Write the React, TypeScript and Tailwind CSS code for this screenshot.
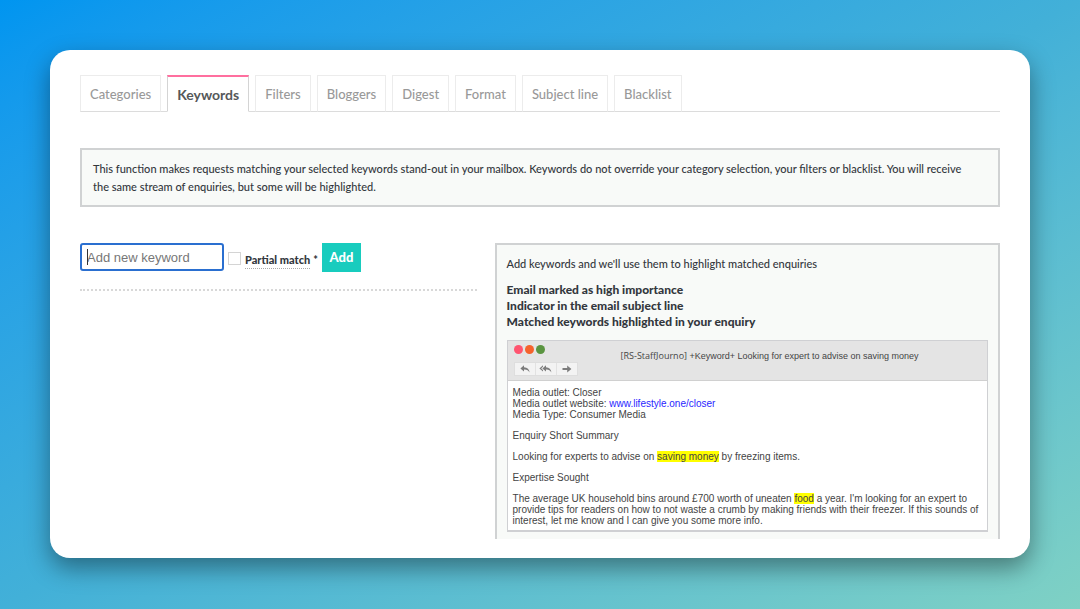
import { useState } from "react";

const tabs = [
  "Categories",
  "Keywords",
  "Filters",
  "Bloggers",
  "Digest",
  "Format",
  "Subject line",
  "Blacklist",
];

function ReplyIcon() {
  return (
    <svg width="10" height="8" viewBox="0 0 10 8" fill="currentColor">
      <path d="M4 0.3 L0.4 3.4 L4 6.4 V4.6 C6.6 4.4 8.4 5.2 9.6 7.6 C9.4 4.4 7.4 2.4 4 2.2 Z" />
    </svg>
  );
}

function ReplyAllIcon() {
  return (
    <svg width="13" height="8" viewBox="0 0 13 8" fill="currentColor">
      <path d="M4 0.3 L0.4 3.4 L4 6.4 V5 L2.2 3.4 L4 1.8 Z" />
      <path d="M7 0.3 L3.4 3.4 L7 6.4 V4.6 C9.4 4.4 11.2 5.2 12.4 7.6 C12.2 4.4 10.2 2.4 7 2.2 Z" />
    </svg>
  );
}

function ForwardIcon() {
  return (
    <svg width="10" height="8" viewBox="0 0 10 8" fill="currentColor">
      <path d="M0.5 3.1 H5.2 V0.6 L9.4 4 L5.2 7.4 V4.9 H0.5 Z" />
    </svg>
  );
}

function MailPreview() {
  return (
    <div className="mt-[10px] border border-b-2 border-[#cfd0d3] bg-white">
      {/* Window title bar */}
      <div className="flex h-10 items-start border-b border-[#d0d0d0] bg-[#e4e4e4] pl-[6px]">
        <div className="w-[107px] shrink-0">
          <div className="mt-1 flex gap-[2px]">
            <span className="h-[9px] w-[9px] rounded-full bg-[#ff5470]" />
            <span className="h-[9px] w-[9px] rounded-full bg-[#f5622c]" />
            <span className="h-[9px] w-[9px] rounded-full bg-[#5a9440]" />
          </div>
          <div className="mt-2 flex w-16 divide-x divide-[#e2e2e2] border border-[#dedede] bg-[#f3f3f3] text-[#7c7c7c]">
            <button aria-label="Reply" className="flex h-3 flex-1 items-center justify-center">
              <ReplyIcon />
            </button>
            <button aria-label="Reply all" className="flex h-3 flex-1 items-center justify-center">
              <ReplyAllIcon />
            </button>
            <button aria-label="Forward" className="flex h-3 flex-1 items-center justify-center">
              <ForwardIcon />
            </button>
          </div>
        </div>
        <p className="mt-[9px] font-['Liberation_Sans',sans-serif] text-[9px] leading-3 whitespace-nowrap text-[#444]">
          <span className="font-['Open_Sans',sans-serif]">[RS-StaffJourno]</span> +Keyword+ Looking
          for expert to advise on saving money
        </p>
      </div>

      {/* Message body */}
      <div className="space-y-[10px] px-[5px] pt-[6px] pb-1 font-['Liberation_Sans',sans-serif] text-[10px] leading-[11px] text-[#444]">
        <p>
          Media outlet: Closer
          <br />
          Media outlet website:{" "}
          <a href="#closer" className="text-[#2a1fff]">
            www.lifestyle.one/closer
          </a>
          <br />
          Media Type: Consumer Media
        </p>
        <p>Enquiry Short Summary</p>
        <p>
          Looking for experts to advise on{" "}
          <mark className="bg-[#ffff00] text-[#444]">saving money</mark> by freezing items.
        </p>
        <p>Expertise Sought</p>
        <p>
          The average UK household bins around £700 worth of uneaten{" "}
          <mark className="bg-[#ffff00] text-[#444]">food</mark> a year. I'm looking for an expert to
          <br />
          provide tips for readers on how to not waste a crumb by making friends with their freezer.
          If this sounds of
          <br />
          interest, let me know and I can give you some more info.
        </p>
      </div>
    </div>
  );
}

function App() {
  const [activeTab, setActiveTab] = useState("Keywords");
  const [keyword, setKeyword] = useState("");
  const [partial, setPartial] = useState(false);

  return (
    <div className="min-h-screen bg-linear-to-br from-[#0095f0] via-[#42b0d8] to-[#7fd1c4] p-[50px] font-['Lato',sans-serif] text-[#33373d]">
      <div className="rounded-[20px] bg-white px-[30px] pt-[25px] pb-[19px] shadow-[0_10px_24px_rgba(0,0,0,0.4)]">
        {/* Tabs */}
        <nav className="flex gap-[6px] border-b border-[#dcdcdc]">
          {tabs.map((tab) => (
            <button
              key={tab}
              onClick={() => setActiveTab(tab)}
              className={`-mb-px h-[37px] border px-[9px] pt-[2px] whitespace-nowrap ${
                activeTab === tab
                  ? "border-t-2 border-[#d4d4d4] border-t-[#ff6f9f] border-b-white bg-white text-sm font-bold text-[#55585a]"
                  : "border-[#ececec] border-b-[#dcdcdc] text-[13px] font-medium text-[#999]"
              }`}
            >
              {tab}
            </button>
          ))}
        </nav>

        <div className="mt-9 border-2 border-[#d0d2d3] bg-[#f8faf8] pt-[10px] pr-6 pb-[9px] pl-[11px] text-[11px] leading-[18px] font-medium">
          This function makes requests matching your selected keywords stand-out in your mailbox.
          Keywords do not override your category selection, your filters or blacklist. You will
          receive the same stream of enquiries, but some will be highlighted.
        </div>

        <div className="mt-9 grid grid-cols-[397fr_506fr] gap-[18px]">
          {/* Add keyword form */}
          <div>
            <form
              onSubmit={(e) => e.preventDefault()}
              className="flex h-12 items-start border-b-2 border-dotted border-[#d8d8d8]"
            >
              <div className="relative">
                <input
                  type="text"
                  autoFocus
                  aria-label="Keyword"
                  placeholder="Add new keyword"
                  value={keyword}
                  onChange={(e) => setKeyword(e.target.value)}
                  className="h-7 w-36 rounded-[3px] border-2 border-[#2a6fd0] px-[5px] font-['Liberation_Sans',sans-serif] text-[13px] outline-none placeholder:text-[#777] placeholder-shown:caret-transparent"
                />
                {/* Caret that stays visible while the box is empty */}
                {!keyword && <span className="absolute top-[6px] left-[7px] h-4 w-px bg-[#333]" />}
              </div>
              <input
                id="partial"
                type="checkbox"
                checked={partial}
                onChange={(e) => setPartial(e.target.checked)}
                className="mt-[9px] ml-1 h-[13px] w-[13px] appearance-none border border-[#d4d4d4] bg-white checked:bg-[#14cdbf]"
              />
              <label htmlFor="partial" className="mt-[9px] ml-1 flex text-[11px] leading-4 font-black">
                <span className="border-b border-dotted border-[#aaa]">Partial match</span>
                <span className="ml-[3px]">*</span>
              </label>
              <button
                type="submit"
                className="ml-1 h-[29px] w-[39px] bg-[#18ccbe] text-[13px] font-black text-white"
              >
                Add
              </button>
            </form>
          </div>

          {/* Explanation panel */}
          <div className="border-2 border-b-0 border-[#d0d2d3] bg-[#f8faf8] px-[10px] pt-[10px] pb-[7px]">
            <p className="text-[11px] leading-[18px] font-medium">
              Add keywords and we'll use them to highlight matched enquiries
            </p>
            <ul className="mt-[9px] text-[12px] leading-[16px] font-black">
              <li>Email marked as high importance</li>
              <li>Indicator in the email subject line</li>
              <li>Matched keywords highlighted in your enquiry</li>
            </ul>
            <MailPreview />
          </div>
        </div>
      </div>
    </div>
  );
}

export default App;
